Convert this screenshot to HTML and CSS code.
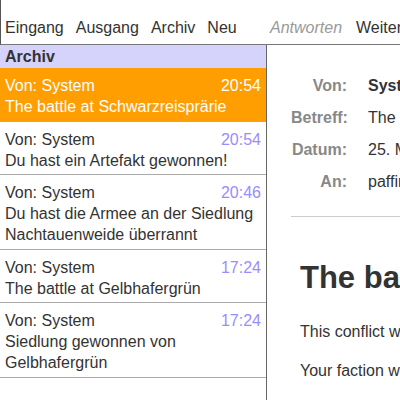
FILE: index.html
```html
<!DOCTYPE html>
<html lang="de">
<head>
<meta charset="utf-8">
<title>Archiv</title>
<link rel="stylesheet" href="styles.css">
</head>
<body>
<div class="toolbar">
  <nav class="nav">
    <span class="nav-item">Eingang</span>
    <span class="nav-item">Ausgang</span>
    <span class="nav-item">Archiv</span>
    <span class="nav-item">Neu</span>
  </nav>
  <div class="actions">
    <span class="action disabled">Antworten</span>
    <span class="action">Weiterleiten</span>
  </div>
</div>
<div class="main">
  <aside class="sidebar">
    <div class="folder-title">Archiv</div>
    <ul class="list">
      <li class="msg selected">
        <div class="msg-head"><span>Von: System</span><span class="time">20:54</span></div>
        <div class="subject">The battle at Schwarzreisprärie</div>
      </li>
      <li class="msg">
        <div class="msg-head"><span>Von: System</span><span class="time">20:54</span></div>
        <div class="subject">Du hast ein Artefakt gewonnen!</div>
      </li>
      <li class="msg">
        <div class="msg-head"><span>Von: System</span><span class="time">20:46</span></div>
        <div class="subject">Du hast die Armee an der Siedlung Nachtauenweide überrannt</div>
      </li>
      <li class="msg">
        <div class="msg-head"><span>Von: System</span><span class="time">17:24</span></div>
        <div class="subject">The battle at Gelbhafergrün</div>
      </li>
      <li class="msg">
        <div class="msg-head"><span>Von: System</span><span class="time">17:24</span></div>
        <div class="subject">Siedlung gewonnen von Gelbhafergrün</div>
      </li>
    </ul>
  </aside>
  <section class="reader">
    <div class="details">
      <span class="label">Von:</span><span class="value strong">System</span>
      <span class="label">Betreff:</span><span class="value">The battle at Schwarzreisprärie</span>
      <span class="label">Datum:</span><span class="value">25. März 2013, 20:54</span>
      <span class="label">An:</span><span class="value">paffinator</span>
    </div>
    <div class="body">
      <h1 class="headline">The battle at Schwarzreisprärie</h1>
      <p class="para">This conflict was fought between two armies.</p>
      <p class="para">Your faction was victorious in this battle.</p>
    </div>
  </section>
</div>
</body>
</html>
```
FILE: styles.css
```css
html, body {
  margin: 0;
  padding: 0;
  height: 100%;
}
body {
  font-family: "Liberation Sans", Arial, sans-serif;
  font-size: 16px;
  line-height: 21px;
  color: #333;
  background: #fff;
  display: flex;
  flex-direction: column;
  overflow: hidden;
}
.toolbar {
  display: flex;
  height: 44px;
  border-bottom: 1px solid #777;
  border-left: 1px solid #555;
  flex: none;
  white-space: nowrap;
  overflow: hidden;
}
.nav {
  flex: none;
  width: 262px;
  display: flex;
  gap: 12px;
  padding: 17px 0 0 4px;
}
.actions {
  flex: none;
  display: flex;
  gap: 14px;
  padding: 17px 0 0 3px;
}
.action.disabled {
  font-style: italic;
  color: #999;
}
.main {
  flex: 1;
  display: flex;
  min-height: 0;
}
.sidebar {
  width: 266px;
  flex: none;
  border-right: 1px solid #666;
}
.folder-title {
  background: #d5d2fb;
  font-weight: bold;
  padding: 1px 5px 1px;
}
.list {
  list-style: none;
  margin: 0;
  padding: 0;
}
.msg {
  padding: 7px 5px 3.5px;
  border-bottom: 1px solid #aaa;
}
.msg-head {
  display: flex;
  justify-content: space-between;
}
.time {
  color: #9a8cff;
}
.msg.selected {
  background: #ff9e00;
  color: #fff;
}
.msg.selected .time {
  color: #fff;
}
.reader {
  flex: 1;
  min-width: 0;
  overflow: hidden;
  white-space: nowrap;
  padding-left: 24px;
}
.details {
  display: grid;
  grid-template-columns: 56px 1fr;
  column-gap: 21px;
  line-height: 32px;
  padding: 25px 0 18px;
  border-bottom: 1px solid #ccc;
}
.label {
  text-align: right;
  font-weight: bold;
  color: #888;
}
.value.strong {
  font-weight: bold;
}
.body {
  padding-left: 9px;
}
.headline {
  font-size: 31px;
  line-height: 36px;
  margin: 43px 0 25px;
  font-weight: bold;
}
.para {
  margin: 0 0 17px;
  line-height: 22px;
}
```
